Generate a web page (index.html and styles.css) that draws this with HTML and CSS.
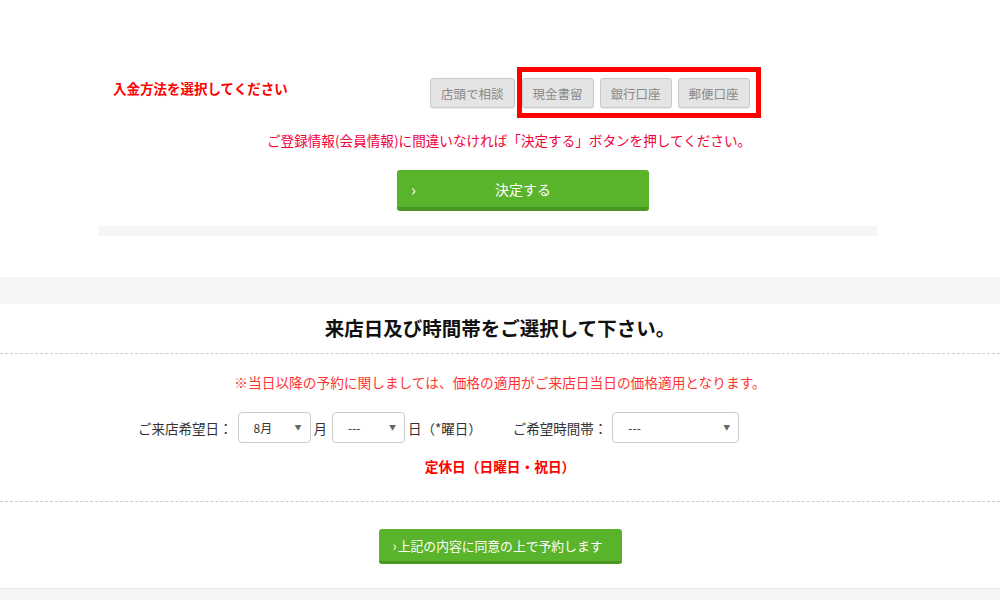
FILE: index.html
```html
<!DOCTYPE html>
<html lang="ja">
  <head>
    <meta charset="UTF-8" />
    <meta name="viewport" content="width=device-width, initial-scale=1.0" />
    <title>ご予約</title>
    <link rel="stylesheet" href="styles.css">
  </head>
  <body>
    <section class="payment">
      <div class="payment-inner">
        <div class="method-row">
          <p class="method-label">入金方法を選択してください</p>
          <div class="methods">
            <button class="method">店頭で相談</button>
            <span class="methods-marked">
              <button class="method">現金書留</button>
              <button class="method">銀行口座</button>
              <button class="method">郵便口座</button>
            </span>
          </div>
        </div>
        <p class="confirm-note">ご登録情報(会員情報)に間違いなければ「決定する」ボタンを押してください。</p>
        <button class="btn-green btn-decide"><span class="chev">›</span>決定する</button>
        <div class="payment-foot"></div>
      </div>
    </section>

    <div class="band"></div>

    <section class="visit">
      <h2 class="visit-title">来店日及び時間帯をご選択して下さい。</h2>
      <div class="visit-body">
        <p class="visit-note">※当日以降の予約に関しましては、価格の適用がご来店日当日の価格適用となります。</p>
        <div class="visit-form">
          <span class="field-label">ご来店希望日：</span>
          <span class="select-wrap sel-month">
            <select><option>8月</option></select>
          </span>
          <span class="unit">月</span>
          <span class="select-wrap sel-day">
            <select><option>---</option></select>
          </span>
          <span class="unit">日（*曜日）</span>
          <span class="field-label time-label">ご希望時間帯：</span>
          <span class="select-wrap sel-time">
            <select><option>---</option></select>
          </span>
        </div>
        <p class="closed">定休日（日曜日・祝日）</p>
      </div>
      <div class="visit-submit">
        <button class="btn-green btn-agree"><span class="chev-small">›</span>上記の内容に同意の上で予約します</button>
      </div>
    </section>

    <div class="page-bottom"></div>
  </body>
</html>
```

FILE: styles.css
```css
* {
  box-sizing: border-box;
}

body {
  margin: 0;
  font-family: "Noto Sans CJK JP", "Liberation Sans", sans-serif;
  color: #333;
  background: #fff;
}

p {
  margin: 0;
}

button {
  font-family: inherit;
  cursor: pointer;
}

/* payment */
.payment {
  height: 277px;
  padding-top: 78px;
}

.payment-inner {
  margin-left: 98px;
  width: 779px;
}

.method-row {
  display: flex;
  align-items: flex-start;
}

.method-label {
  width: 332px;
  padding-left: 15px;
  font-size: 13.5px;
  line-height: 20px;
  font-weight: bold;
  color: #f00;
}

.methods {
  display: flex;
  gap: 7px;
}

.methods-marked {
  position: relative;
  display: flex;
  gap: 6px;
}

.methods-marked::after {
  content: "";
  position: absolute;
  left: -5px;
  right: -11px;
  top: -11px;
  bottom: -10px;
  border: 5px solid #f00;
  pointer-events: none;
}

.method {
  height: 30px;
  padding: 0 10px;
  font-size: 12.5px;
  color: #888;
  background: #e4e4e4;
  border: 1px solid #c9c9c9;
  border-radius: 3px;
  box-shadow: 0 1px 1px rgba(0, 0, 0, 0.08);
}

.confirm-note {
  margin-top: 22px;
  padding-left: 169px;
  font-size: 13.6px;
  line-height: 20px;
  color: #f1003a;
}

.btn-green {
  display: flex;
  align-items: center;
  color: #fff;
  background: #5ab42b;
  border: none;
  border-radius: 3px;
}

.btn-decide {
  position: relative;
  justify-content: center;
  margin-top: 20px;
  margin-left: 299px;
  width: 252px;
  height: 41px;
  font-size: 14px;
  border-bottom: 4px solid #4a9823;
}

.chev {
  position: absolute;
  left: 14px;
  top: 7px;
  font-size: 16px;
}

.payment-foot {
  margin-top: 15px;
  height: 10px;
  background: #f6f6f6;
}

.band {
  height: 27px;
  background: #f5f5f5;
}

/* visit date */
.visit {
  border-bottom: 1px solid #e6e6e6;
}

.visit-title {
  margin: 0;
  padding-top: 10px;
  height: 49px;
  text-align: center;
  font-size: 19.5px;
  line-height: 28px;
  color: #111;
}

.visit-body {
  border-top: 1px dashed #ccc;
  border-bottom: 1px dashed #ccc;
  padding: 18px 0 25px;
}

.visit-note {
  text-align: center;
  font-size: 13.7px;
  line-height: 20px;
  color: #f33;
}

.visit-form {
  display: flex;
  align-items: center;
  margin-top: 20px;
  padding-left: 138px;
  font-size: 13.5px;
  color: #333;
}

.field-label {
  margin-right: 5px;
}

.time-label {
  margin-left: 26px;
  margin-right: 5px;
}

.unit {
  margin: 0 5px 0 3px;
}

.select-wrap {
  position: relative;
  display: inline-block;
}

.select-wrap::after {
  content: "▼";
  position: absolute;
  right: 9px;
  top: 10px;
  font-size: 7px;
  color: #666;
  pointer-events: none;
}

.select-wrap select {
  appearance: none;
  -webkit-appearance: none;
  height: 31px;
  padding: 0 0 0 15px;
  font-family: inherit;
  font-size: 12px;
  color: #333;
  background: #fff;
  border: 1px solid #ccc;
  border-radius: 4px;
}

.sel-month select,
.sel-day select {
  width: 73px;
}

.sel-time select {
  width: 127px;
}

.closed {
  margin-top: 13px;
  text-align: center;
  font-size: 13.7px;
  line-height: 20px;
  font-weight: bold;
  color: #f00;
}

.visit-submit {
  display: flex;
  justify-content: center;
  padding: 27px 0 24px;
}

.btn-agree {
  width: 243px;
  height: 35px;
  padding-left: 14px;
  font-size: 12.8px;
  border-bottom: 3px solid #4a9823;
}

.chev-small {
  font-size: 14px;
  margin-right: 1px;
}

.page-bottom {
  height: 40px;
  background: #f5f5f5;
}
```
